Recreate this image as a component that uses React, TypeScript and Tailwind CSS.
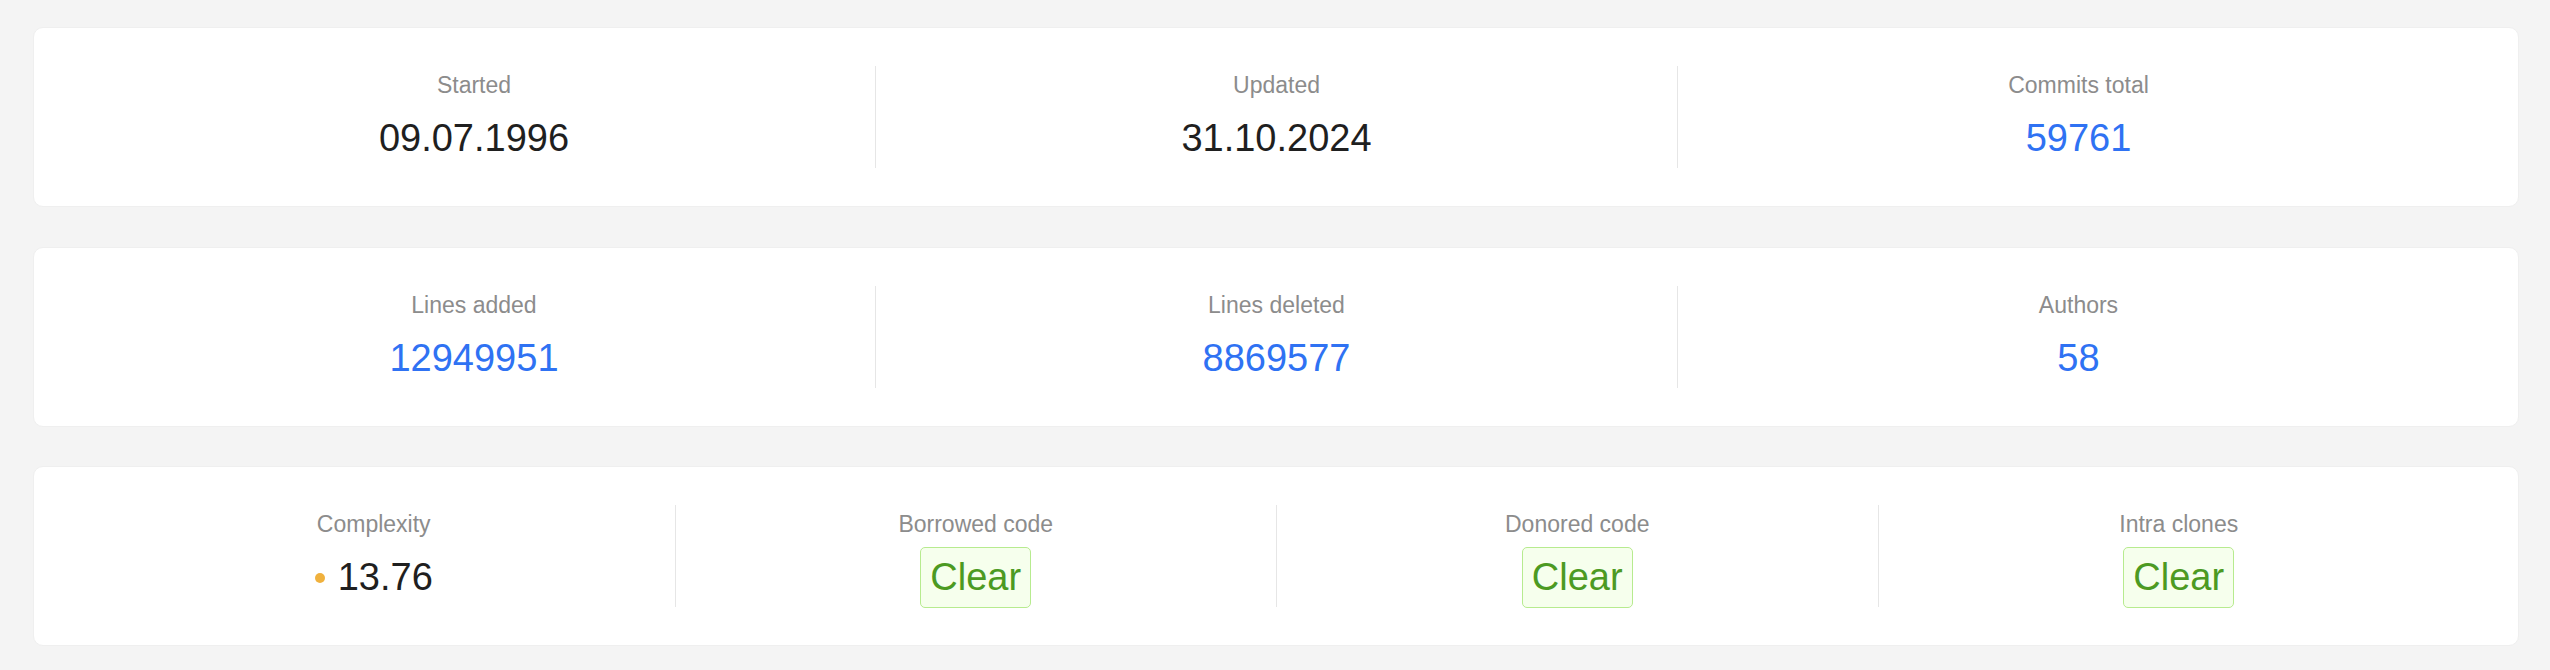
import React from 'react';

type Stat = {
  title: string;
  value: string;
  kind?: 'plain' | 'link' | 'tag' | 'dot';
};

const rows: Stat[][] = [
  [
    { title: 'Started', value: '09.07.1996' },
    { title: 'Updated', value: '31.10.2024' },
    { title: 'Commits total', value: '59761', kind: 'link' },
  ],
  [
    { title: 'Lines added', value: '12949951', kind: 'link' },
    { title: 'Lines deleted', value: '8869577', kind: 'link' },
    { title: 'Authors', value: '58', kind: 'link' },
  ],
  [
    { title: 'Complexity', value: '13.76', kind: 'dot' },
    { title: 'Borrowed code', value: 'Clear', kind: 'tag' },
    { title: 'Donored code', value: 'Clear', kind: 'tag' },
    { title: 'Intra clones', value: 'Clear', kind: 'tag' },
  ],
];

const StatValue = ({ stat }: { stat: Stat }) => {
  if (stat.kind === 'tag') {
    return (
      <span className="inline-block h-[61px] px-[9px] rounded-[5px] border border-[#b7eb8f] bg-[#f6ffed] text-[#4c9a22] leading-[59px]">
        {stat.value}
      </span>
    );
  }
  if (stat.kind === 'dot') {
    return (
      <span className="flex items-center h-[61px] text-[#1f1f1f]">
        <span className="w-[10px] h-[10px] rounded-full bg-[#f0b13d] mr-[13px]" />
        {stat.value}
      </span>
    );
  }
  return (
    <span className={`block h-[61px] leading-[61px] ${stat.kind === 'link' ? 'text-[#2f72f3]' : 'text-[#1f1f1f]'}`}>
      {stat.value}
    </span>
  );
};

const App = () => {
  return (
    <div className="min-h-[670px] bg-[#f4f4f4] pl-[33px] pr-[31px] pt-[27px] font-['Liberation_Sans',Arial,sans-serif]">
      <div className="flex flex-col gap-[39.5px]">
        {rows.map((row, i) => (
          <div key={i} className="bg-white border border-[#efefef] rounded-[10px] px-[39px] py-[38px]">
            <div className={`grid ${row.length === 4 ? 'grid-cols-4' : 'grid-cols-3'}`}>
              {row.map((stat, j) => (
                <div
                  key={stat.title}
                  className={`h-[102px] pt-[1px] flex flex-col items-center ${j > 0 ? 'border-l border-[#e6e6e6]' : ''}`}
                >
                  <div className="text-[23px] leading-[36px] text-[#8c8c8c] mb-[5px]">{stat.title}</div>
                  <div className="text-[38px]">
                    <StatValue stat={stat} />
                  </div>
                </div>
              ))}
            </div>
          </div>
        ))}
      </div>
    </div>
  );
};

export default App;
